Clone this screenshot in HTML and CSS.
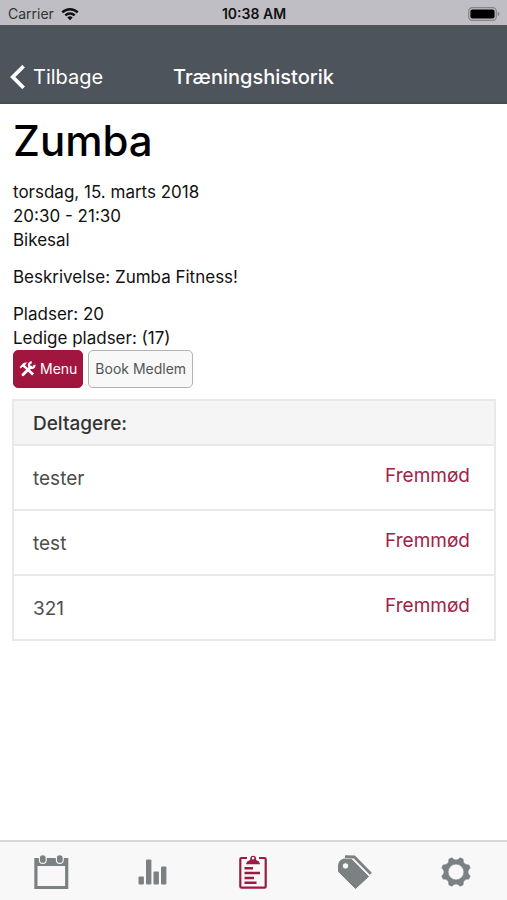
FILE: index.html
```html
<!DOCTYPE html>
<html lang="da">
<head>
<meta charset="utf-8">
<meta name="viewport" content="width=device-width, initial-scale=1">
<title>Træningshistorik</title>
<link rel="stylesheet" href="styles.css">
</head>
<body>
<div class="status-bar">
  <div class="carrier">
    <span>Carrier</span>
    <svg width="18" height="14" viewBox="0 0 18 14" aria-hidden="true"><g fill="none" stroke="#111" stroke-width="2.5"><path d="M1.3 5.3a11 11 0 0 1 15.4 0"/><path d="M4.3 8.4a6.700 6.700 0 0 1 9.400 0"/></g><path d="M9 13.2 6.3 10.5a3.800 3.800 0 0 1 5.400 0z" fill="#111"/></svg>
  </div>
  <span class="clock">10:38 AM</span>
  <svg class="battery" width="32" height="14" viewBox="0 0 32 14" aria-hidden="true"><rect x=".7" y=".7" width="27.6" height="12.6" rx="3.6" fill="none" stroke="#85848a" stroke-width="1.2"/><rect x="2.4" y="2.4" width="24.2" height="9.2" rx="2" fill="#000"/><path d="M29.7 4.700v4.600q1.800-.6 1.800-2.300t-1.800-2.300z" fill="#85848a"/></svg>
</div>
<header class="nav-bar">
  <a class="back" href="#">
    <svg width="15" height="24" viewBox="0 0 15 24" aria-hidden="true"><path d="M13.6 1.200 2.800 12l10.800 10.800" fill="none" stroke="#fff" stroke-width="3.8"/></svg>
    <span>Tilbage</span>
  </a>
  <span class="title">Træningshistorik</span>
</header>
<main>
  <section class="details">
    <h1>Zumba</h1>
    <p>torsdag, 15. marts 2018<br>20:30 - 21:30<br>Bikesal</p>
    <p>Beskrivelse: Zumba Fitness!</p>
    <p>Pladser: 20<br>Ledige pladser: (17)</p>
    <div class="actions">
      <button class="btn primary" type="button">
        <svg width="17" height="16" viewBox="0 0 18 16" aria-hidden="true"><path d="M4.2 14 12.400 6" stroke="#fff" stroke-width="3" stroke-linecap="round"/><path d="M16.300 3.600a2.900 2.900 0 1 1-2.800-2.500" fill="none" stroke="#fff" stroke-width="2.4"/><path d="M.7 6.200 2.900 3.400Q5.300.4 9 1.400 6.700 2.200 6.500 4.200L16 12.800 13.900 15 5.100 6.500 3.500 5.600 2 7.500z" fill="#fff"/></svg>
        Menu
      </button>
      <button class="btn" type="button">Book Medlem</button>
    </div>
  </section>
  <section class="participants">
    <h2>Deltagere:</h2>
    <ul>
      <li><span>tester</span><a href="#">Fremmød</a></li>
      <li><span>test</span><a href="#">Fremmød</a></li>
      <li><span>321</span><a href="#">Fremmød</a></li>
    </ul>
  </section>
</main>
<nav class="tab-bar">
  <a href="#" aria-label="Kalender"><svg width="36" height="36" viewBox="0 0 36 36"><path fill="currentColor" fill-rule="evenodd" d="M1.300 4h34v31h-34zM4.500 12v20h27.600V12z"/><g fill="currentColor" stroke="#f8f8f8" stroke-width="1.1"><rect x="6.400" y=".8" width="6.800" height="8.600" rx="3.400"/><rect x="23.400" y=".8" width="6.800" height="8.600" rx="3.400"/></g></svg></a>
  <a href="#" aria-label="Statistik"><svg width="36" height="36" viewBox="0 0 36 36"><g fill="currentColor"><rect x="4.500" y="22.500" width="5.400" height="8" rx="1"/><rect x="12" y="5.500" width="5.400" height="25" rx="1"/><rect x="19.500" y="17.500" width="5.400" height="13" rx="1"/><rect x="27" y="12.500" width="5.400" height="18" rx="1"/></g></svg></a>
  <a href="#" class="active" aria-label="Træningshistorik" aria-current="page"><svg width="36" height="36" viewBox="0 0 36 36"><path d="M12 4H6.500Q5.300 4 5.300 5.200v27.300q0 1.200 1.200 1.200h23q1.200 0 1.200-1.200V5.200Q30.700 4 29.500 4H24" fill="none" stroke="currentColor" stroke-width="2.200"/><path fill="currentColor" fill-rule="evenodd" d="M11 10.200Q11.500 7 15.200 6V4.200a3 3 0 0 1 5.900 0V6Q24.600 7 25 10.200zM18.100 2.900a1.300 1.300 0 1 0 0 2.600 1.300 1.300 0 0 0 0-2.600z"/><path d="M9.500 14.200h8.500M9.500 19h15.500M9.500 24h9.500M9.500 28.800h12" stroke="currentColor" stroke-width="2.400"/></svg></a>
  <a href="#" aria-label="Tilbud"><svg width="36" height="36" viewBox="0 0 36 36"><path fill="currentColor" fill-rule="evenodd" stroke="currentColor" stroke-linejoin="round" d="M1.500 10.500V17.500L18.500 34.500 31.500 22.500 14.500 5.300 6.500 5Q2 6.500 1.500 10.500zM8.500 8.700a3.200 3.200 0 1 1 0 6.400 3.200 3.200 0 0 1 0-6.400z"/><path d="M8 2.700 17.300 3 33.800 19.700" fill="none" stroke="currentColor" stroke-width="2.800"/></svg></a>
  <a href="#" aria-label="Indstillinger"><svg width="36" height="36" viewBox="0 0 36 36"><path transform="translate(18 18)" fill="currentColor" stroke="currentColor" stroke-width=".6" stroke-linejoin="round" fill-rule="evenodd" d="M4.100 14.200 7.100 12.900Q6.800 6.800 12.900 7.100L14.200 4.100Q9.600 0 14.200-4.100L12.900-7.100Q6.800-6.800 7.100-12.900L4.100-14.200Q0-9.600-4.100-14.200L-7.100-12.900Q-6.800-6.800-12.900-7.100L-14.200-4.100Q-9.600 0-14.200 4.100L-12.900 7.100Q-6.800 6.800-7.100 12.900L-4.100 14.200Q0 9.600 4.100 14.200zM0-7.900a7.900 7.900 0 1 0 0 15.800 7.900 7.900 0 0 0 0-15.800z"/></svg></a>
</nav>
</body>
</html>
```
FILE: styles.css
```css
* { box-sizing: border-box; }

body {
  margin: 0;
  min-height: 100vh;
  display: flex;
  flex-direction: column;
  background: #fff;
  color: #111;
  font: 17px/24px Inter, "Liberation Sans", sans-serif;
}

a { color: inherit; text-decoration: none; }
svg { display: block; }

.status-bar,
.nav-bar {
  display: grid;
  grid-template-columns: 1fr auto 1fr;
  align-items: center;
}

.status-bar {
  padding: 2px 7px 0 8px;
  background: #bfbec4;
  font-size: 14px;
  line-height: 23px;
}

.carrier { display: flex; align-items: center; gap: 7px; color: #333; }
.clock { font-weight: 600; }
.battery { justify-self: end; }

.nav-bar {
  padding: 37px 10px 10px;
  background: #4d545b;
  border-bottom: 2px solid #484b50;
  color: #fff;
  font-size: 20px;
  line-height: 30px;
}

.back { display: flex; align-items: center; gap: 8px; }
.title { font-weight: 500; }

main { flex: 1; padding: 12px 11px 12px 12px; }
.details { padding: 0 1px; }

h1 {
  margin: 0 0 14px;
  font-size: 42px;
  line-height: 50px;
  font-weight: 500;
  color: #000;
}

p { margin: 0 0 13px; }
.details p:last-of-type { margin: 0; }

.actions { display: flex; gap: 5px; margin-bottom: 11px; }

.btn {
  display: flex;
  align-items: center;
  gap: 4px;
  height: 38px;
  padding: 0 6px;
  border: 1px solid #b2b2b2;
  border-radius: 5px;
  background: #f8f8f8;
  color: #555;
  font: inherit;
  font-size: 14px;
}

.btn.primary { padding: 0 5px; background: #a0163f; border-color: #a0163f; color: #fff; }

.participants { border: 2px solid #e9e9e9; color: #4d4d4d; }

h2 {
  margin: 0;
  padding: 7px 19px 5px;
  background: #f5f5f5;
  color: #333;
  font-size: 19px;
  line-height: 31px;
  font-weight: 500;
}

ul { margin: 0; padding: 0; list-style: none; }

li {
  display: flex;
  justify-content: space-between;
  padding: 17px 24px 15px 19px;
  border-top: 2px solid #e9e9e9;
  font-size: 19px;
  line-height: 31px;
}

li a { color: #a12249; line-height: 26px; }

.tab-bar {
  position: sticky;
  bottom: 0;
  display: grid;
  grid-template-columns: repeat(5, 1fr);
  justify-items: center;
  padding: 12px 0 10px;
  border-top: 2px solid #d8d8d8;
  background: #f8f8f8;
  color: #7b8083;
}

.tab-bar .active { color: #991c42; }
```
